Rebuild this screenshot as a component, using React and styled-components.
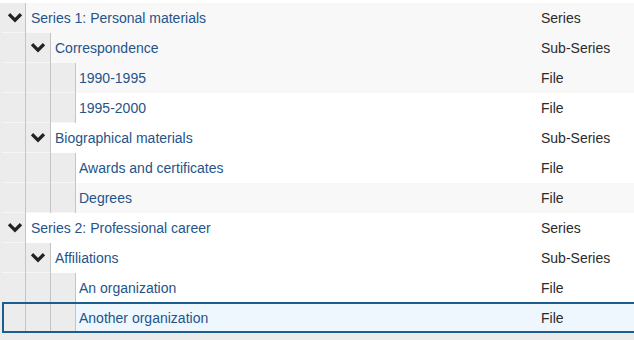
import React from 'react';
import styled, { createGlobalStyle } from 'styled-components';

const GlobalStyle = createGlobalStyle`
  html, body {
    margin: 0;
    padding: 0;
    background: #fff;
  }
  body {
    font-family: "Liberation Sans", Arial, Helvetica, sans-serif;
  }
`;

const tree = [
  { title: 'Series 1: Personal materials', type: 'Series', level: 0, parent: true, shade: true },
  { title: 'Correspondence', type: 'Sub-Series', level: 1, parent: true, shade: true },
  { title: '1990-1995', type: 'File', level: 2, shade: true },
  { title: '1995-2000', type: 'File', level: 2 },
  { title: 'Biographical materials', type: 'Sub-Series', level: 1, parent: true },
  { title: 'Awards and certificates', type: 'File', level: 2 },
  { title: 'Degrees', type: 'File', level: 2, shade: true },
  { title: 'Series 2: Professional career', type: 'Series', level: 0, parent: true },
  { title: 'Affiliations', type: 'Sub-Series', level: 1, parent: true },
  { title: 'An organization', type: 'File', level: 2 },
  { title: 'Another organization', type: 'File', level: 2, selected: true },
];

const Page = styled.div`
  width: 634px;
  height: 340px;
  overflow: hidden;
  display: flex;
  flex-direction: column;
  background: #ececec;
`;

const Tree = styled.div`
  display: flex;
  flex-direction: column;
  padding-left: 2px;
`;

const TopEdge = styled.div`
  height: 3px;
  background: #fff;
`;

const Row = styled.div`
  position: relative;
  display: flex;
  align-items: stretch;
  height: 30px;
  background: ${p => (p.$selected ? '#eef7fe' : p.$shade ? '#f8f8f8' : '#fff')};

  &::after {
    content: '';
    display: ${p => (p.$selected ? 'block' : 'none')};
    position: absolute;
    inset: -1px -4px 0 0;
    border: 2px solid #1c5d8f;
    pointer-events: none;
  }
`;

const Indent = styled.div`
  flex: none;
  box-sizing: border-box;
  width: ${p => (p.$first ? '24px' : '25px')};
  padding-left: ${p => (p.$first ? '2px' : '0')};
  border-right: 1px solid #c4c4c4;
  background: #ececec;
  box-shadow: inset 0 -1px 0 #f6f6f6;
  display: flex;
  align-items: center;
  justify-content: center;
`;

const Title = styled.a`
  flex: 1;
  display: flex;
  align-items: center;
  padding-left: ${p => 5 - p.$level}px;
  font-size: 14px;
  color: #24548a;
  text-decoration: none;
  white-space: nowrap;
`;

const Type = styled.div`
  flex: none;
  width: 93px;
  display: flex;
  align-items: center;
  font-size: 14px;
  color: #2b2b2b;
`;

const Footer = styled.div`
  flex: 1;
  background: #ebebeb;
`;

const Chevron = () => (
  <svg width="14" height="10" viewBox="0 0 14 10">
    <polyline
      points="2.2,2.4 7,7.2 11.8,2.4"
      fill="none"
      stroke="#222"
      strokeWidth="3.3"
      strokeLinecap="square"
    />
  </svg>
);

const TreeRow = ({ node }) => {
  const cells = [];
  for (let i = 0; i <= node.level; i++) {
    cells.push(
      <Indent key={i} $first={i === 0}>
        {node.parent && i === node.level && <Chevron />}
      </Indent>
    );
  }
  return (
    <Row $shade={node.shade} $selected={node.selected}>
      {cells}
      <Title href="#" $level={node.level}>{node.title}</Title>
      <Type>{node.type}</Type>
    </Row>
  );
};

export default function App() {
  return (
    <>
      <GlobalStyle />
      <Page>
        <TopEdge />
        <Tree>
          {tree.map(node => (
            <TreeRow key={node.title} node={node} />
          ))}
        </Tree>
        <Footer />
      </Page>
    </>
  );
}
